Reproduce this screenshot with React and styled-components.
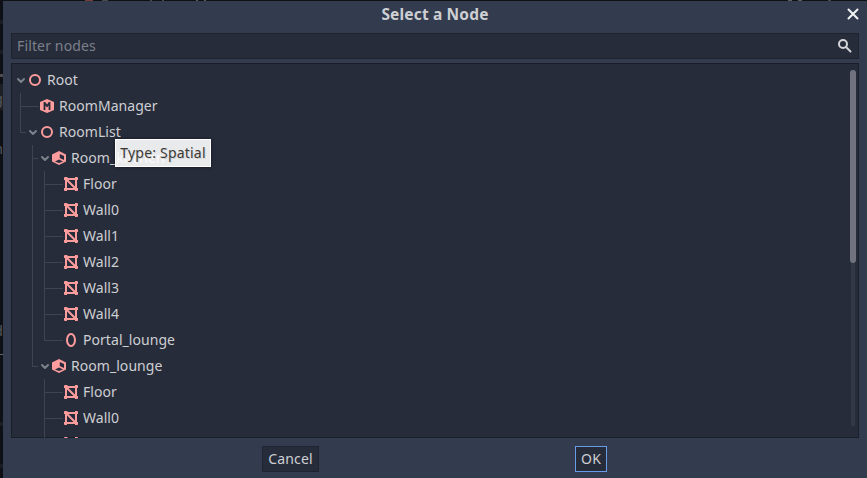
import React from "react";
import styled, { createGlobalStyle, css } from "styled-components";

const GlobalStyle = createGlobalStyle`
  * { box-sizing: border-box; }
  body { margin: 0; overflow: hidden; }
`;

const LINE = "#3f4453";
const ACCENT = "#fc9c9c";
const PANEL = "#272c3b";

const Screen = styled.div`
  display: grid;
  grid-template: 1px 477px / 3px 864px;
  width: 867px;
  height: 478px;
  overflow: hidden;
  background: #0e1016;
  font: 14px/26px "Noto Sans", sans-serif;
  letter-spacing: 0.05px;
  color: #cdcfd2;
`;

/* Dimmed editor toolbar showing above the dialog */
const EditorTop = styled.div`
  grid-column: 1 / -1;
  background: linear-gradient(
    90deg,
    #0e1016 85px, #753f35 85px 93px, #0e1016 93px 102px, #48494b 102px 108px,
    #0e1016 108px 150px, #48494b 150px 152px, #0e1016 152px 162px, #48494b 162px 164px,
    #0e1016 164px 196px, #5c5d60 196px 198px, #0e1016 198px 204px, #5c5d60 204px 206px,
    #0e1016 206px 788px, #5c5d60 788px 792px, #0e1016 792px 798px, #5c5d60 798px 802px,
    #0e1016 802px 828px, #48494b 828px 831px, #0e1016 831px
  );
`;

/* Dimmed editor dock showing left of the dialog */
const EditorEdge = styled.div`
  display: flex;
  flex-direction: column;
  align-items: flex-end;
  gap: 30px;
  padding-top: 88px;
  overflow: hidden;
  line-height: 20px;
  color: #54565b;
  background: linear-gradient(
    #0e1016 19px, #181c25 19px 23px, #0e1016 23px 49px, #181c25 49px 53px,
    #0e1016 53px 73px, #4b4b4c 73px 76px, #0e1016 76px 83px, #1d1f24 83px 109px,
    #0e1016 109px 353px, #66676a 353px 354px, #0e1016 354px 421px, #181c25 421px 425px,
    #0e1016 425px 463px, #181c25 463px 467px, #0e1016 467px
  );
`;

const EdgeText = styled.span`
  margin-bottom: ${(p) => p.$after || 0}px;
`;

const Dialog = styled.div`
  position: relative;
  display: flex;
  flex-direction: column;
  padding: 0 8px 6px;
  background: #333b4f;
`;

const TitleBar = styled.header`
  display: grid;
  grid-template-columns: 1fr auto 1fr;
  align-items: center;
  height: 32px;
  padding-bottom: 6px;
  font-weight: 700;
  font-size: 15.5px;
  letter-spacing: 0.16px;
`;

const Title = styled.span`
  grid-column: 2;
`;

const Close = styled.button`
  grid-column: 3;
  justify-self: end;
  display: flex;
  padding: 0;
  border: 0;
  background: none;
  color: #f1f2f4;
`;

const Filter = styled.div`
  display: flex;
  align-items: center;
  justify-content: space-between;
  height: 26px;
  padding: 0 6px;
  background: ${PANEL};
  box-shadow: inset 0 0 0 1px #202431;
  color: #7c808a;
  letter-spacing: 0.14px;
`;

const Tree = styled.div`
  display: flex;
  justify-content: space-between;
  height: 375px;
  margin-top: 4px;
  padding: 4px 3px 0 4px;
  overflow: hidden;
  background: ${PANEL};
  box-shadow: inset 0 0 0 1px #191e29;
`;

const Rows = styled.div`
  flex: 1;
`;

const Row = styled.div`
  display: flex;
  align-items: center;
  height: 26px;
  padding-left: ${(p) => (p.$depth ? 5 + (p.$depth - 1) * 12 : 0)}px;
  ${(p) =>
    p.$rail &&
    css`
      background: linear-gradient(${LINE}, ${LINE}) 17px 0 / 1px 26px no-repeat;
    `}
`;

const Elbow = styled.span`
  width: ${(p) => (p.$leaf ? 19 : 7)}px;
  height: 26px;
  background:
    linear-gradient(${LINE}, ${LINE}) 0 0 / 1px ${(p) => (p.$last ? 14 : 26)}px no-repeat,
    linear-gradient(${LINE}, ${LINE}) 0 13px / ${(p) => (p.$leaf ? 19 : 6)}px 1px no-repeat;
`;

const Toggle = styled.svg`
  width: 12px;
  height: 12px;
`;

const NodeIcon = styled.svg`
  width: 16px;
  height: 16px;
  margin-right: 4px;
`;

const Label = styled.span`
  white-space: pre;
`;

const Track = styled.div`
  width: 6px;
  height: 356px;
  margin-top: 3px;
  background: linear-gradient(#333847, #333847) 1px 0 / 4px 100% no-repeat;
`;

const Thumb = styled.div`
  height: 193px;
  border-radius: 3px;
  background: #70737e;
`;

const Actions = styled.footer`
  display: flex;
  justify-content: space-between;
  margin-top: 8px;
  padding: 0 252px 0 251px;
`;

const Button = styled.button`
  height: 26px;
  padding: 0 5px;
  border: 1px solid ${(p) => (p.$focus ? "#699ce8" : "#202431")};
  background: ${PANEL};
  color: inherit;
  font: inherit;
  letter-spacing: 0.15px;
  line-height: 24px;
  width: ${(p) => p.$w}px;
`;

const Tooltip = styled.div`
  position: absolute;
  left: 112px;
  top: 138px;
  width: 96px;
  height: 28px;
  border: 1px solid #fff;
  background: rgba(255, 255, 255, 0.9);
  box-shadow: 0 0 3px rgba(0, 0, 0, 0.55);
  color: #3d3a36;
  text-shadow: 1px 1px 0 rgba(0, 0, 0, 0.12);
  text-align: center;
  letter-spacing: 0.2px;
  line-height: 26px;
`;

const glyphs = {
  spatial: <circle cx="8" cy="8" r="5" fill="none" stroke={ACCENT} strokeWidth="2" />,
  manager: (
    <>
      <path d="M8 1l7 3v8l-7 3-7-3V4z" fill={ACCENT} />
      <path d="M4.6 4h1.6L8 6.6 9.8 4h1.6v8H9.6V7.4L8 9.4 6.4 7.4V12H4.6z" fill={PANEL} />
    </>
  ),
  room: (
    <>
      <path d="M8 1l7 3.4v7.2L8 15l-7-3.4V4.4z" fill={ACCENT} />
      <path d="M8.8 4v4l4.2 2V6zM8 9.6l-4 2 4 1.5 4-1.5z" fill={PANEL} />
    </>
  ),
  mesh: (
    <>
      <path d="M3 3h10v10H3zM3 3l10 10" fill="none" stroke={ACCENT} strokeWidth="2" />
      <path
        d="M1 2a1 1 0 011-1h2l1 1v2H1zM12 1h2a1 1 0 011 1v2h-3zM1 12h3v3H2a1 1 0 01-1-1zM12 12h3v2a1 1 0 01-1 1h-2z"
        fill={ACCENT}
      />
    </>
  ),
  portal: <ellipse cx="8" cy="8" rx="4" ry="6" fill="none" stroke={ACCENT} strokeWidth="2" />,
};

const nodes = [
  { name: "Root", icon: "spatial", depth: 0, open: true },
  { name: "RoomManager", icon: "manager", depth: 1 },
  { name: "RoomList", icon: "spatial", depth: 1, open: true, last: true },
  { name: "Room_kitchen", icon: "room", depth: 2, open: true },
  ...["Floor", "Wall0", "Wall1", "Wall2", "Wall3", "Wall4"].map((name) => ({ name, icon: "mesh", depth: 3, rail: true })),
  { name: "Portal_lounge", icon: "portal", depth: 3, last: true, rail: true },
  { name: "Room_lounge", icon: "room", depth: 2, open: true, last: true },
  { name: "Floor", icon: "mesh", depth: 3 },
  { name: "Wall0", icon: "mesh", depth: 3 },
  { name: "Wall1", icon: "mesh", depth: 3 },
];

function TreeRow({ node }) {
  return (
    <Row $depth={node.depth} $rail={node.rail}>
      {node.depth > 0 && <Elbow $leaf={!node.open} $last={node.last} />}
      {node.open && (
        <Toggle viewBox="0 0 12 12">
          <path d="M3 5l3 3 3-3" fill="none" stroke="#7d818b" strokeWidth="2" strokeLinecap="round" strokeLinejoin="round" />
        </Toggle>
      )}
      <NodeIcon viewBox="0 0 16 16">{glyphs[node.icon]}</NodeIcon>
      <Label>{node.name}</Label>
    </Row>
  );
}

export default function App() {
  return (
    <Screen>
      <GlobalStyle />
      <EditorTop />
      <EditorEdge>
        <EdgeText>g</EdgeText>
        <EdgeText $after={132}>h</EdgeText>
        <EdgeText>d</EdgeText>
      </EditorEdge>
      <Dialog>
        <TitleBar>
          <Title>Select a Node</Title>
          <Close aria-label="Close">
            <svg width="12" height="12" viewBox="0 0 12 12">
              <path d="M1.5 1.5l9 9m0-9l-9 9" stroke="currentColor" strokeWidth="2" strokeLinecap="round" />
            </svg>
          </Close>
        </TitleBar>
        <Filter>
          <span>Filter nodes</span>
          <svg width="16" height="16" viewBox="0 0 16 16" fill="none" stroke="#d4d5d8" strokeWidth="2">
            <circle cx="6" cy="6" r="4" />
            <path d="M9 9l4.5 4.5" strokeLinecap="round" />
          </svg>
        </Filter>
        <Tree>
          <Rows>
            {nodes.map((node, i) => (
              <TreeRow key={i} node={node} />
            ))}
          </Rows>
          <Track>
            <Thumb />
          </Track>
        </Tree>
        <Actions>
          <Button $w={57}>Cancel</Button>
          <Button $w={32} $focus>OK</Button>
        </Actions>
        <Tooltip>Type: Spatial</Tooltip>
      </Dialog>
    </Screen>
  );
}
